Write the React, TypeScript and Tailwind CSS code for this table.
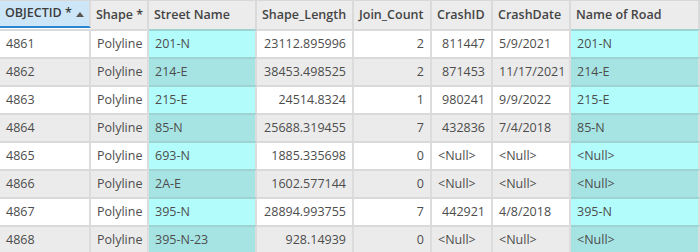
import React from 'react';

type Row = {
  oid: string;
  street: string;
  len: string;
  join: string;
  crashId: string;
  date: string;
  road: string;
};

const rows: Row[] = [
  { oid: '4861', street: '201-N', len: '23112.895996', join: '2', crashId: '811447', date: '5/9/2021', road: '201-N' },
  { oid: '4862', street: '214-E', len: '38453.498525', join: '2', crashId: '871453', date: '11/17/2021', road: '214-E' },
  { oid: '4863', street: '215-E', len: '24514.8324', join: '1', crashId: '980241', date: '9/9/2022', road: '215-E' },
  { oid: '4864', street: '85-N', len: '25688.319455', join: '7', crashId: '432836', date: '7/4/2018', road: '85-N' },
  { oid: '4865', street: '693-N', len: '1885.335698', join: '0', crashId: '<Null>', date: '<Null>', road: '<Null>' },
  { oid: '4866', street: '2A-E', len: '1602.577144', join: '0', crashId: '<Null>', date: '<Null>', road: '<Null>' },
  { oid: '4867', street: '395-N', len: '28894.993755', join: '7', crashId: '442921', date: '4/8/2018', road: '395-N' },
  { oid: '4868', street: '395-N-23', len: '928.14939', join: '0', crashId: '<Null>', date: '<Null>', road: '<Null>' },
];

const grid = 'grid grid-cols-[91px_58px_108px_97px_78px_61px_78px_129px]';

const Head = ({ children }: { children: React.ReactNode }) => (
  <div className="h-[28px] flex items-center px-[5px] bg-[#ececec] border-r-2 border-[#dadada] font-semibold text-[#444] whitespace-nowrap overflow-hidden">
    {children}
  </div>
);

export default function App() {
  return (
    <div
      className="w-[700px] h-[252px] overflow-hidden bg-white text-[12.5px] text-[#4d4d4d]"
      style={{ fontFamily: '"Segoe UI", "Open Sans", "Noto Sans", sans-serif' }}
    >
      <div className={`${grid} border-t border-[#d8d8d8]`}>
        <div className="h-[27px] flex items-center gap-[4px] px-[5px] bg-[#cde6f7] border-b-2 border-[#2a86d1] border-r-2 border-r-[#dadada] font-semibold text-[#3c3c3c] whitespace-nowrap overflow-hidden">
          <span>OBJECTID *</span>
          <svg width="8" height="6" viewBox="0 0 8 6" className="shrink-0">
            <path d="M0 6 L4 1 L8 6 Z" fill="#555" />
          </svg>
        </div>
        <Head>Shape *</Head>
        <Head>Street Name</Head>
        <Head>Shape_Length</Head>
        <Head>Join_Count</Head>
        <Head>CrashID</Head>
        <Head>CrashDate</Head>
        <Head>Name of Road</Head>
      </div>
      {rows.map((r, i) => {
        const odd = i % 2 === 1;
        const bg = odd ? 'bg-[#ebebeb]' : 'bg-white';
        const cyan = odd ? 'bg-[#a6e4e4]' : 'bg-[#b2fcfc]';
        const cell = 'h-[28px] flex items-center px-[6px] whitespace-nowrap border-r-2 border-[#dcdcdc] border-t-2 border-t-[#dadada]';
        const cyanCell = 'h-[28px] flex items-center px-[6px] whitespace-nowrap border-r-2 border-[#dcdcdc] border-t-2 border-t-[#9fd3d3]';
        const isNull = r.crashId === '<Null>';
        return (
          <div key={r.oid} className={grid}>
            <div className={`${cell} ${bg}`}>{r.oid}</div>
            <div className={`${cell} ${bg}`}>Polyline</div>
            <div className={`${cyanCell} ${cyan}`}>{r.street}</div>
            <div className={`${cell} ${bg} justify-end`}>{r.len}</div>
            <div className={`${cell} ${bg} justify-end`}>{r.join}</div>
            <div className={`${cell} ${bg} ${isNull ? '' : 'justify-end'}`}>{r.crashId}</div>
            <div className={`${cell} ${bg}`}>{r.date}</div>
            <div className={`${cyanCell} ${cyan}`}>{r.road}</div>
          </div>
        );
      })}
    </div>
  );
}
